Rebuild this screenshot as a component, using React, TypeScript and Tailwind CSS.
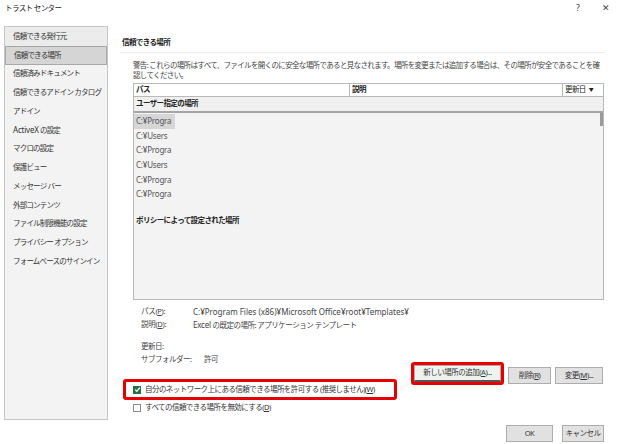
import React from "react";

const font = { fontFamily: '"Noto Sans", "Noto Sans CJK JP", sans-serif' };

const menuItems: React.ReactNode[] = [
  "信頼できる発行元",
  "信頼できる場所",
  "信頼済みドキュメント",
  "信頼できるアドイン カタログ",
  "アドイン",
  <>
    <span className="text-[8px] tracking-[-0.2px]">ActiveX</span> の設定
  </>,
  "マクロの設定",
  "保護ビュー",
  "メッセージ バー",
  "外部コンテンツ",
  "ファイル制限機能の設定",
  "プライバシー オプション",
  "フォームベースのサインイン",
];

const paths = ["C:¥Progra", "C:¥Users", "C:¥Progra", "C:¥Users", "C:¥Progra", "C:¥Progra"];

function Btn({ children, className = "" }: { children: React.ReactNode; className?: string }) {
  return (
    <div
      className={`h-[17px] flex items-center justify-center border border-[#adadad] bg-[#e1e1e1] text-[7.5px] tracking-[-0.5px] text-[#333] ${className}`}
    >
      {children}
    </div>
  );
}

export default function App() {
  return (
    <div style={font} className="w-[617px] h-[444px] bg-white text-[#333] overflow-hidden">
      {/* title bar */}
      <div className="h-[26px] flex items-start justify-between pt-[3px] pl-[5px] pr-[7px]">
        <span className="text-[7.5px] tracking-[-0.6px] text-[#222]">トラスト センター</span>
        <div className="flex gap-[22px] text-[9px] text-[#444] leading-[10px]">
          <span>?</span>
          <span>✕</span>
        </div>
      </div>

      <div className="flex">
        {/* sidebar */}
        <div className="ml-[4px] w-[104px] h-[394px] border border-[#c6c6c6] bg-[#f3f3f3]">
          {menuItems.map((item, i) => (
            <div
              key={i}
              className={`h-[18.75px] flex items-center pl-[8px] text-[7.5px] tracking-[-0.8px] whitespace-pre ${
                i === 1 ? "bg-[#d5d5d5] border border-[#a8a8a8]" : i === 0 ? "bg-[#ececec]" : ""
              }`}
            >
              {item}
            </div>
          ))}
        </div>

        {/* main */}
        <div className="ml-[12px] w-[485px]">
          <div className="pt-[11px] pb-[5px] leading-[10px] border-b border-[#ececec] pl-[2px] text-[7.5px] tracking-[-0.6px] font-bold text-[#222]">
            信頼できる場所
          </div>

          <div className="pl-[13px] pr-[2px]">
            <div className="mt-[7px] text-[7.5px] tracking-[-0.65px] leading-[10px] text-[#444]">
              警告: これらの場所はすべて、ファイルを開くのに安全な場所であると見なされます。場所を変更または追加する場合は、その場所が安全であることを確認してください。
            </div>

            {/* table */}
            <div className="mt-[3px] w-[471px] border border-[#b9b9b9]">
              <div className="h-[13px] flex bg-white text-[7.5px] tracking-[-0.6px] font-bold text-[#222] border-b border-[#b9b9b9]">
                <div className="w-[216px] pl-[2px] flex items-center border-r border-[#b9b9b9]">パス</div>
                <div className="w-[213px] pl-[2px] flex items-center border-r border-[#b9b9b9]">説明</div>
                <div className="flex-1 pl-[2px] flex items-center gap-[3px] font-normal">
                  更新日 <span className="text-[5px]">▼</span>
                </div>
              </div>
              <div className="h-[16px] flex items-center pl-[2px] bg-[#f0f0f0] text-[7.5px] tracking-[-0.6px] font-bold text-[#222] border-b-2 border-[#a5a5a5]">
                ユーザー指定の場所
              </div>
              <div className="relative h-[186px] bg-[#f3f3f3]">
                <div className="absolute right-0 top-0 w-[3px] h-[13px] bg-[#9a9a9a]" />
                <div className="pt-[1px]">
                  {paths.map((p, i) => (
                    <div key={i} className="h-[14.6px] flex items-center">
                      <div
                        className={`w-[41px] h-full pl-[2px] flex items-center whitespace-nowrap text-[8px] tracking-[-0.2px] text-[#555] ${
                          i === 0 ? "bg-[#d6d6d6]" : ""
                        }`}
                      >
                        {p}
                      </div>
                    </div>
                  ))}
                </div>
                <div className="mt-[13px] pl-[2px] text-[7.5px] tracking-[-0.6px] font-bold text-[#222]">
                  ポリシーによって設定された場所
                </div>
              </div>
            </div>

            {/* details */}
            <div className="mt-[5px] pl-[8px] text-[7.5px] text-[#444] leading-[13px]">
              <div className="flex">
                <span className="w-[52px] tracking-[-0.3px]">
                  パス(<span className="underline">P</span>):
                </span>
                <span className="text-[8px]">C:¥Program Files (x86)¥Microsoft Office¥root¥Templates¥</span>
              </div>
              <div className="flex">
                <span className="w-[52px] tracking-[-0.3px]">
                  説明(<span className="underline">D</span>):
                </span>
                <span className="tracking-[-0.5px] whitespace-pre">
                  <span className="text-[8px] tracking-[-0.2px]">Excel</span> の既定の場所: アプリケーション テンプレート
                </span>
              </div>
              <div className="mt-[8px] tracking-[-0.5px]">更新日:</div>
              <div className="flex tracking-[-0.5px]">
                <span className="w-[63px]">サブフォルダー:</span>
                <span>許可</span>
              </div>
            </div>

            {/* buttons */}
            <div className="mt-[-4px] flex justify-end gap-[4px]">
              <div className="rounded-[3px] border-[3px] border-[#e60000]">
                <Btn className="w-[87px] bg-[#eef3ef] border-b-[2px] border-b-[#555]">
                  新しい場所の追加(<span className="underline">A</span>)...
                </Btn>
              </div>
              <div className="flex items-end gap-[4px] pb-[1px]">
                <Btn className="w-[43px]">
                  削除(<span className="underline">R</span>)
                </Btn>
                <Btn className="w-[48px]">
                  変更(<span className="underline">M</span>)...
                </Btn>
              </div>
            </div>
          </div>

          {/* checkboxes */}
          <div className="-mt-[6px] ml-[3px] w-[274px] h-[21px] rounded-[3px] border-[3px] border-[#e60000] flex items-center pl-[7px] gap-[4px]">
            <div className="w-[8px] h-[8px] bg-[#217346] flex items-center justify-center">
              <svg width="7" height="7" viewBox="0 0 8 8">
                <path d="M1.3 4.2 L3.2 6 L6.8 1.8" stroke="white" strokeWidth="1.4" fill="none" />
              </svg>
            </div>
            <span className="text-[7.5px] tracking-[-0.55px] text-[#333]">
              自分のネットワーク上にある信頼できる場所を許可する (推奨しません)(<span className="underline">W</span>)
            </span>
          </div>
          <div className="ml-[13px] mt-[2px] flex items-center gap-[4px]">
            <div className="w-[8px] h-[8px] border border-[#888] bg-white" />
            <span className="text-[7.5px] tracking-[-0.55px] text-[#333]">
              すべての信頼できる場所を無効にする(<span className="underline">D</span>)
            </span>
          </div>

          <div className="mt-[12px] flex justify-end gap-[9px] pr-[1px]">
            <Btn className="w-[47px]">OK</Btn>
            <Btn className="w-[42px]">キャンセル</Btn>
          </div>
        </div>
      </div>
    </div>
  );
}
